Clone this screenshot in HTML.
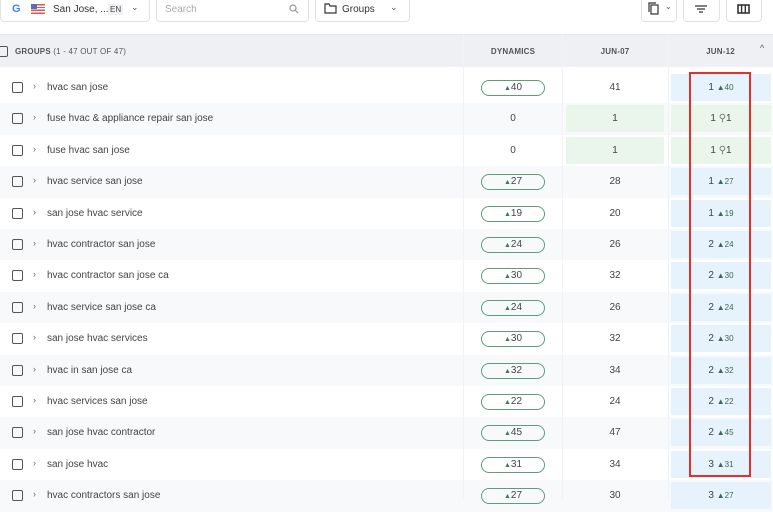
<!DOCTYPE html>
<html><head><meta charset="utf-8"><style>
*{box-sizing:border-box;margin:0;padding:0}
body{width:773px;height:500px;overflow:hidden;background:#fff;font-family:"Liberation Sans",sans-serif;color:#333;position:relative;font-size:10px}
.abs{position:absolute}
.btn{position:absolute;top:-6px;height:28px;border:1px solid #dfe2e8;border-radius:4px;background:#fff}
.hdr{position:absolute;left:0;top:34px;width:773px;height:33px;background:#eef0f4;border-top:1px solid #e3e6ec}
.hdr .t{position:absolute;top:12px;font-size:8px;font-weight:bold;color:#555;letter-spacing:.2px}
.row{position:absolute;left:0;width:773px;height:31.4px}
.row.g{background:#f8f9fb}
.cb{position:absolute;left:12px;top:10px;width:11px;height:11px;border:1.5px solid #555;border-radius:2px}
.ch{position:absolute;left:33px;top:9px;font-size:9px;color:#666}
.nm{position:absolute;left:47px;top:10px;font-size:10px;color:#444}
.pill{position:absolute;left:481px;top:8px;width:64px;height:16px;border:1px solid #5e9c7c;border-radius:8px;text-align:center;font-size:10px;line-height:14px;color:#444}
.up{font-size:7px;color:#3d7a57}
.z{position:absolute;left:463px;width:100px;top:10px;text-align:center;font-size:10px;color:#444}
.n7{position:absolute;left:562px;width:106px;top:10px;text-align:center;font-size:10px;color:#444}
.c7{position:absolute;left:566px;width:98px;top:2px;height:27px;text-align:center;line-height:27px;font-size:10px;color:#444}
.c12{position:absolute;left:671px;width:100px;top:2px;height:27px;text-align:center;line-height:27px;font-size:10px;color:#444}
.bl{background:#e6f2fc}.gr{background:#eaf6ec}
.sm{font-size:8px;color:#3d6a55}
.vl{position:absolute;top:34px;height:466px;width:1px;background:#f1f2f5}
</style></head><body>
<div class="btn" style="left:0;width:150px"></div>
<div class="abs" style="left:12px;top:3px;font-weight:bold;font-size:11px;color:#4285f4">G</div>
<div class="abs" style="left:31px;top:4px;width:14px;height:10px;background:repeating-linear-gradient(#d55 0 1.4px,#fff 1.4px 2.8px)"><div style="width:6px;height:5px;background:#5a6fb0"></div></div>
<div class="abs" style="left:53px;top:4px;font-size:10px;color:#333">San Jose, ...</div>
<div class="abs" style="left:108px;top:4px;font-size:8px;background:#eef0f4;padding:1px 2px;color:#444">EN</div>
<div class="abs" style="left:131px;top:2px;font-size:9px;color:#555">⌄</div>
<div class="btn" style="left:156px;width:153px"></div>
<div class="abs" style="left:165px;top:4px;font-size:10px;color:#aaa">Search</div>
<svg class="abs" style="left:289px;top:4px" width="10" height="10"><circle cx="4" cy="4" r="3" fill="none" stroke="#999" stroke-width="1.2"/><line x1="6.3" y1="6.3" x2="9" y2="9" stroke="#999" stroke-width="1.2"/></svg>
<div class="btn" style="left:315px;width:95px"></div>
<svg class="abs" style="left:324px;top:3px" width="13" height="11"><path d="M1 1h4l1 2h6v7H1z" fill="none" stroke="#333" stroke-width="1.2"/></svg>
<div class="abs" style="left:342px;top:4px;font-size:10px;color:#333">Groups</div>
<div class="abs" style="left:390px;top:2px;font-size:9px;color:#555">⌄</div>
<div class="btn" style="left:641px;width:36px"></div>
<svg class="abs" style="left:648px;top:2px" width="14" height="14"><rect x="3" y="3" width="7" height="9" fill="none" stroke="#333" stroke-width="1.2"/><path d="M1 10V1h7" fill="none" stroke="#333" stroke-width="1.2"/></svg>
<div class="abs" style="left:665px;top:2px;font-size:8px;color:#555">⌄</div>
<div class="btn" style="left:683px;width:37px"></div>
<svg class="abs" style="left:694px;top:4px" width="14" height="10"><path d="M1 2h12M3 5h8M5 8h4" stroke="#333" stroke-width="1.2"/></svg>
<div class="btn" style="left:726px;width:36px"></div>
<svg class="abs" style="left:737px;top:4px" width="13" height="10"><rect x="1" y="1" width="11" height="8" fill="none" stroke="#333" stroke-width="1.6"/><path d="M4.6 1v8M8.3 1v8" stroke="#333" stroke-width="1.4"/></svg>

<div class="hdr">
<div class="abs" style="left:-3px;top:11px;width:11px;height:11px;border:1.5px solid #555;border-radius:2px"></div>
<div class="t" style="left:15px">GROUPS <span style="font-weight:normal">(1 - 47 OUT OF 47)</span></div>
<div class="t" style="left:463px;width:100px;text-align:center">DYNAMICS</div>
<div class="t" style="left:562px;width:106px;text-align:center">JUN-07</div>
<div class="t" style="left:668px;width:105px;text-align:center">JUN-12</div>
<div class="abs" style="left:760px;top:8px;font-size:9px;color:#555">^</div>
</div>

<div class="row" style="top:72px"><div class="cb"></div><div class="ch">›</div><div class="nm">hvac san jose</div><div class="pill"><span class="up">▲</span>40</div><div class="n7">41</div><div class="c12 bl">1 <span class="sm">▲40</span></div></div>
<div class="row g" style="top:103.4px"><div class="cb"></div><div class="ch">›</div><div class="nm">fuse hvac &amp; appliance repair san jose</div><div class="z">0</div><div class="c7 gr">1</div><div class="c12 gr">1 <span style="color:#777">⚲</span>1</div></div>
<div class="row" style="top:134.8px"><div class="cb"></div><div class="ch">›</div><div class="nm">fuse hvac san jose</div><div class="z">0</div><div class="c7 gr">1</div><div class="c12 gr">1 <span style="color:#777">⚲</span>1</div></div>
<div class="row g" style="top:166.2px"><div class="cb"></div><div class="ch">›</div><div class="nm">hvac service san jose</div><div class="pill"><span class="up">▲</span>27</div><div class="n7">28</div><div class="c12 bl">1 <span class="sm">▲27</span></div></div>
<div class="row" style="top:197.6px"><div class="cb"></div><div class="ch">›</div><div class="nm">san jose hvac service</div><div class="pill"><span class="up">▲</span>19</div><div class="n7">20</div><div class="c12 bl">1 <span class="sm">▲19</span></div></div>
<div class="row g" style="top:229px"><div class="cb"></div><div class="ch">›</div><div class="nm">hvac contractor san jose</div><div class="pill"><span class="up">▲</span>24</div><div class="n7">26</div><div class="c12 bl">2 <span class="sm">▲24</span></div></div>
<div class="row" style="top:260.4px"><div class="cb"></div><div class="ch">›</div><div class="nm">hvac contractor san jose ca</div><div class="pill"><span class="up">▲</span>30</div><div class="n7">32</div><div class="c12 bl">2 <span class="sm">▲30</span></div></div>
<div class="row g" style="top:291.8px"><div class="cb"></div><div class="ch">›</div><div class="nm">hvac service san jose ca</div><div class="pill"><span class="up">▲</span>24</div><div class="n7">26</div><div class="c12 bl">2 <span class="sm">▲24</span></div></div>
<div class="row" style="top:323.2px"><div class="cb"></div><div class="ch">›</div><div class="nm">san jose hvac services</div><div class="pill"><span class="up">▲</span>30</div><div class="n7">32</div><div class="c12 bl">2 <span class="sm">▲30</span></div></div>
<div class="row g" style="top:354.6px"><div class="cb"></div><div class="ch">›</div><div class="nm">hvac in san jose ca</div><div class="pill"><span class="up">▲</span>32</div><div class="n7">34</div><div class="c12 bl">2 <span class="sm">▲32</span></div></div>
<div class="row" style="top:386px"><div class="cb"></div><div class="ch">›</div><div class="nm">hvac services san jose</div><div class="pill"><span class="up">▲</span>22</div><div class="n7">24</div><div class="c12 bl">2 <span class="sm">▲22</span></div></div>
<div class="row g" style="top:417.4px"><div class="cb"></div><div class="ch">›</div><div class="nm">san jose hvac contractor</div><div class="pill"><span class="up">▲</span>45</div><div class="n7">47</div><div class="c12 bl">2 <span class="sm">▲45</span></div></div>
<div class="row" style="top:448.8px"><div class="cb"></div><div class="ch">›</div><div class="nm">san jose hvac</div><div class="pill"><span class="up">▲</span>31</div><div class="n7">34</div><div class="c12 bl">3 <span class="sm">▲31</span></div></div>
<div class="row g" style="top:480.2px"><div class="cb"></div><div class="ch">›</div><div class="nm">hvac contractors san jose</div><div class="pill"><span class="up">▲</span>27</div><div class="n7">30</div><div class="c12 bl">3 <span class="sm">▲27</span></div></div>

<div class="vl" style="left:463px"></div>
<div class="vl" style="left:562px"></div>
<div class="vl" style="left:668px"></div>
<div class="abs" style="left:689px;top:72px;width:62px;height:405px;border:2px solid #e0312b"></div>
</body></html>
